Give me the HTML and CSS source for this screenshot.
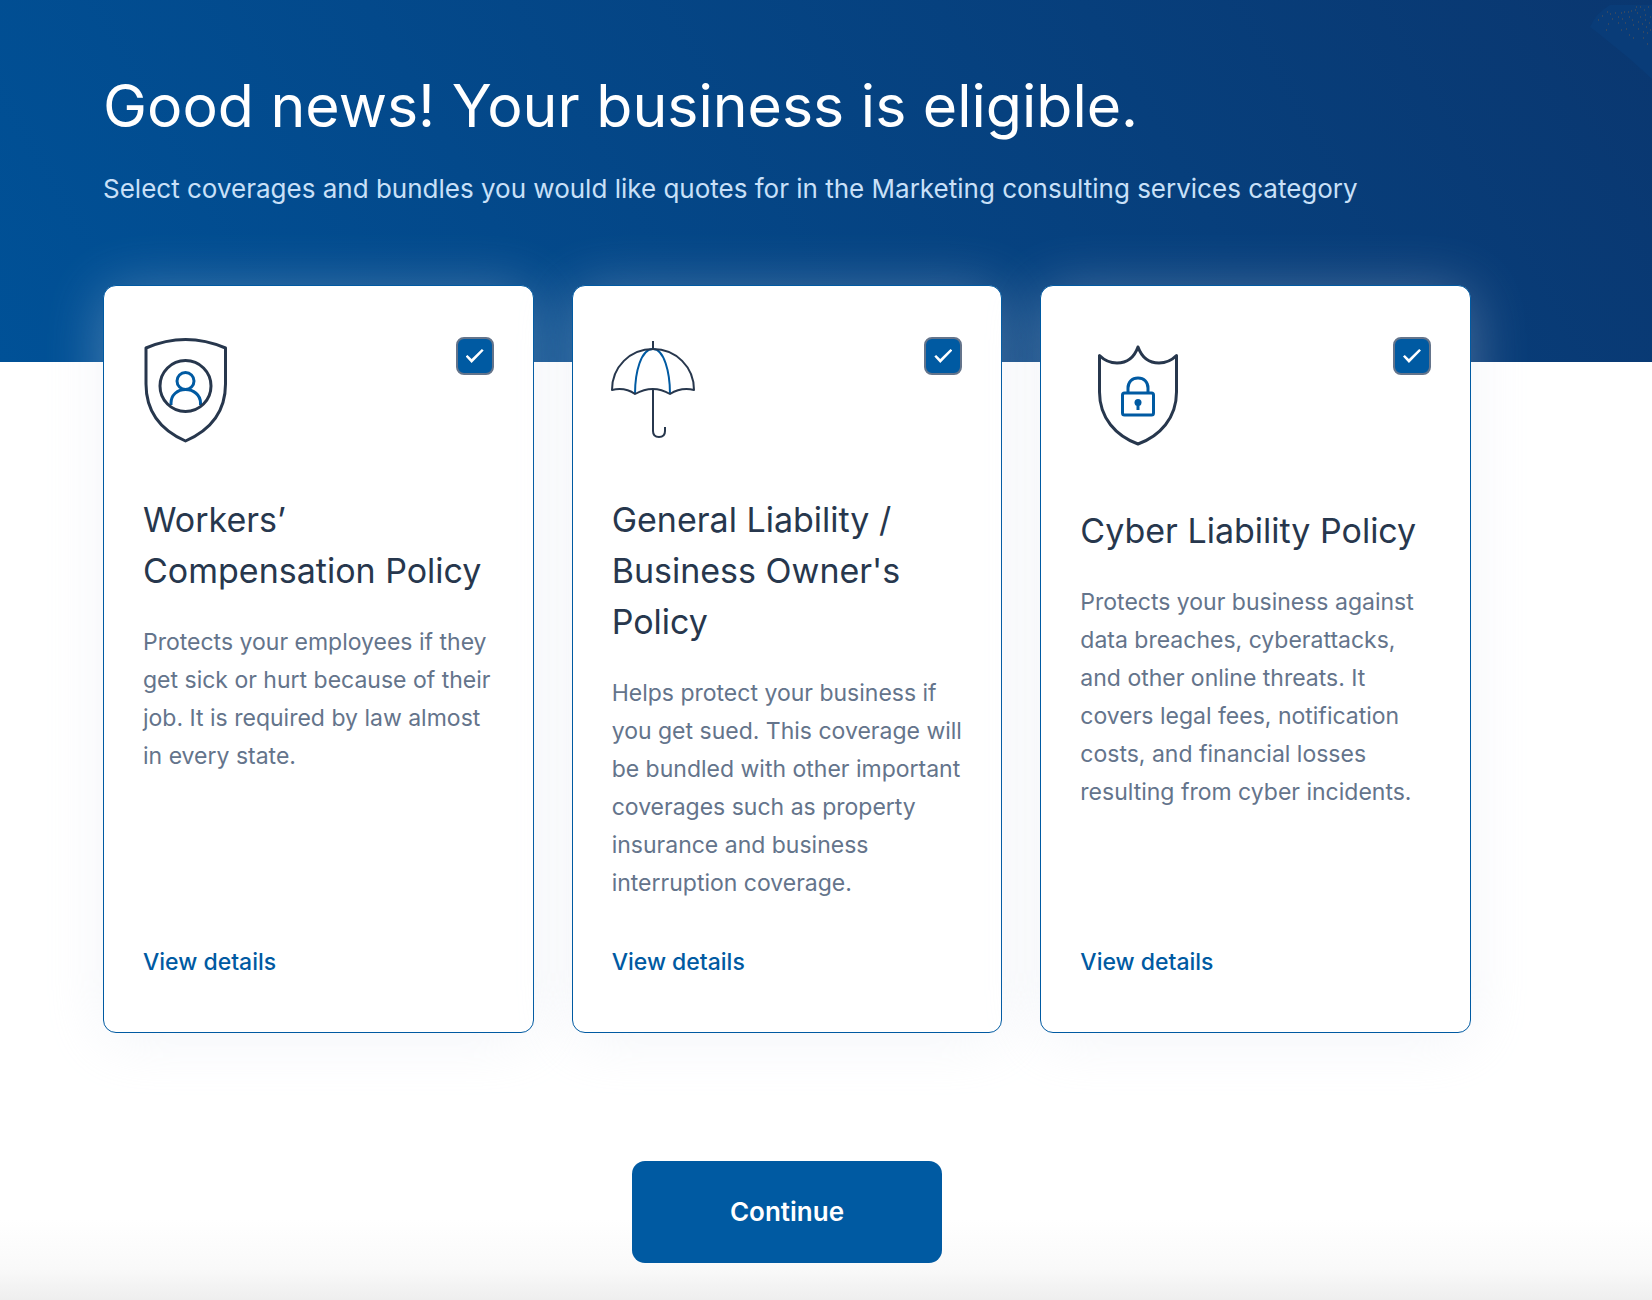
FILE: index.html
```html
<!DOCTYPE html>
<html lang="en">
<head>
    <meta charset="UTF-8">
    <meta name="viewport" content="width=device-width, initial-scale=1">
    <title>Select coverages</title>
    <link rel="stylesheet" href="styles.css">
</head>
<body>
    <header class="hero">
        <svg class="hero-decor" viewBox="0 0 62 74" aria-hidden="true">
            <path class="decor-shape" d="M20 0h42v74L40 54 24 41 8 28 0 22Q6 8 20 0z"/>
            <path class="decor-dots" d="M8 15h1M12 11h1M17 7h1M20 9h1M16 25h1M18 19h1M22 14h1M25 8h1M28 12h1M28 18h1M31 8h1M32 14h1M31 25h1M34 7h1M35 18h1M36 24h1M38 7h1M39 12h1M39 30h1M41 6h1M42 15h1M43 20h1M43 33h1M45 5h1M46 2h1M47 8h1M48 17h1M48 24h1M50 12h1M50 2h1M52 19h1M53 27h1M53 33h1M54 5h1M55 10h1M55 15h1M56 22h1M57 28h1M57 39h1M58 2h1M59 18h1M60 12h1M60 25h1"/>
        </svg>
        <h1 class="hero-title">Good news! Your business is eligible.</h1>
        <p class="hero-subtitle">Select coverages and bundles you would like quotes for in the Marketing consulting services category</p>
    </header>

    <form class="coverages">
        <div class="cards">
            <section class="card">
                <div class="card-top">
                    <svg class="icon" viewBox="0 0 84 105" aria-hidden="true">
                        <path class="dark" d="M3 11Q42.500-6 82.500 11V47C82.500 75 67.500 93 42.500 104C17.500 93 3 75 3 47Z"/>
                        <path class="blue" d="M28 68V66C28 58 34.500 52.500 42.500 52.500S57.500 58 57.500 66V68"/>
                        <circle class="blue" cx="42.500" cy="44" r="8.500"/>
                        <circle class="dark" cx="42.500" cy="49" r="25.500"/>
                    </svg>
                    <input type="checkbox" class="check" aria-labelledby="workers-title" checked>
                </div>
                <h2 class="card-title" id="workers-title">Workers’ Compensation Policy</h2>
                <p class="card-text">Protects your employees if they get sick or hurt because of their job. It is required by law almost in every state.</p>
                <a href="#" class="details-link">View details</a>
            </section>

            <section class="card">
                <div class="card-top">
                    <svg class="icon thin" viewBox="1 0 84 105" aria-hidden="true">
                        <path class="blue" d="M42 12C30 12 24 35 24 57M42 12C53 12 59 35 59 57"/>
                        <path class="dark" d="M42 4V12M1 53C1 30 19 12 42 12S83 30 83 53Q70 50 59 57Q42 47 24 57Q14 50 1 53Z"/>
                        <path class="dark" d="M42 52V94Q42 100 48 100Q54 100 54 94V90"/>
                    </svg>
                    <input type="checkbox" class="check" aria-labelledby="liability-title" checked>
                </div>
                <h2 class="card-title" id="liability-title">General Liability / Business Owner's Policy</h2>
                <p class="card-text">Helps protect your business if you get sued. This coverage will be bundled with other important coverages such as property insurance and business interruption coverage.</p>
                <a href="#" class="details-link">View details</a>
            </section>

            <section class="card">
                <div class="card-top">
                    <svg class="icon icon-large" viewBox="0 0 116 116" aria-hidden="true">
                        <path class="dark" d="M58 10C54 21 47 26 37 26Q27 26 19.500 18.500V55C19.500 81 36 99 58 107C80 99 96.500 81 96.500 55V18.500Q89 26 79 26C69 26 62 21 58 10Z"/>
                        <path class="blue" d="M48 56V51C48 45 52 41 58 41S68 45 68 51V56"/>
                        <rect class="blue" x="42.500" y="56" width="31" height="22" rx="2"/>
                        <circle class="keyhole" cx="58" cy="65.500" r="3.500"/>
                        <path class="keyhole" d="M56.500 65H59.500V73H56.500Z"/>
                    </svg>
                    <input type="checkbox" class="check" aria-labelledby="cyber-title" checked>
                </div>
                <h2 class="card-title" id="cyber-title">Cyber Liability Policy</h2>
                <p class="card-text">Protects your business against data breaches, cyberattacks, and other online threats. It covers legal fees, notification costs, and financial losses resulting from cyber incidents.</p>
                <a href="#" class="details-link">View details</a>
            </section>
        </div>
        <button type="submit" class="continue-btn">Continue</button>
    </form>
</body>
</html>
```

FILE: styles.css
```css
* {
    box-sizing: border-box;
}
body {
    display: flex;
    flex-direction: column;
    min-height: 100vh;
    margin: 0;
    font-family: Inter, "Liberation Sans", sans-serif;
    color: #27374d;
    background-color: #fff;
}
h1, h2, p {
    margin: 0;
}
.hero {
    position: relative;
    padding: 70px 181px 153px 103px;
    background: linear-gradient(60deg, #005197, #0a3770);
}
.hero-decor {
    position: absolute;
    top: 5px;
    right: 0;
    width: 62px;
    height: 74px;
}
.decor-shape {
    fill: #093c78;
}
.decor-dots {
    fill: none;
    stroke: #5c5450;
    stroke-width: 1;
}
.hero-title {
    font-size: 59px;
    font-weight: 400;
    line-height: 72px;
    color: #fff;
}
.hero-subtitle {
    margin-top: 27px;
    font-size: 26px;
    line-height: 40px;
    color: #c9e0f8;
}
.coverages {
    flex: 1;
    display: flex;
    flex-direction: column;
    align-items: center;
    padding: 0 181px 37px 103px;
    background: linear-gradient(to top, #eee, #f9f9f9 30px, #fff 80px);
}
.cards {
    position: relative;
    display: grid;
    grid-template-columns: repeat(3, 1fr);
    gap: 38px;
    width: 100%;
    margin-top: -77px;
}
.card {
    display: flex;
    flex-direction: column;
    align-items: flex-start;
    padding: 51px 39px;
    border: 1px solid #005aa2;
    border-radius: 13px;
    background-color: #fff;
    box-shadow: 0 6px 60px rgba(220, 224, 238, 0.33);
}
.card-top {
    display: flex;
    justify-content: space-between;
    align-items: flex-start;
    width: 100%;
    margin-bottom: 52px;
}
.icon {
    width: 84px;
    height: 105px;
    overflow: visible;
    fill: none;
    stroke-width: 3;
    stroke-linejoin: round;
}
.icon.thin {
    stroke-width: 2;
}
.icon-large {
    width: 116px;
    height: 116px;
}
.dark {
    stroke: #27374d;
}
.blue {
    stroke: #005aa2;
}
.keyhole {
    fill: #005aa2;
}
.check {
    appearance: none;
    display: grid;
    place-items: center;
    width: 38px;
    height: 38px;
    margin: 0;
    border: 2px solid #64748b;
    border-radius: 8px;
    background-color: #fff;
    cursor: pointer;
}
.check:checked {
    background-color: #005aa2;
}
.check:checked::before {
    content: "";
    width: 18px;
    height: 14px;
    background-color: #fff;
    clip-path: polygon(0 54%, 10% 43%, 33% 72%, 90% 0, 100% 11%, 33% 100%);
}
.card-title {
    font-size: 34px;
    font-weight: 400;
    line-height: 51px;
}
.card-text {
    margin: 27px 0 41px;
    font-size: 23px;
    line-height: 38px;
    color: #64748b;
}
.details-link {
    margin-top: auto;
    font-size: 23px;
    font-weight: 500;
    line-height: 38px;
    color: #005aa2;
    text-decoration: none;
}
.details-link:hover {
    text-decoration: underline;
}
.continue-btn {
    width: 310px;
    margin-top: 128px;
    padding: 31px;
    border: none;
    border-radius: 13px;
    background-color: #005aa2;
    font-family: inherit;
    font-size: 26px;
    font-weight: 600;
    line-height: 40px;
    color: #fff;
    cursor: pointer;
}
.continue-btn:hover {
    background-color: #004d8c;
}
```
